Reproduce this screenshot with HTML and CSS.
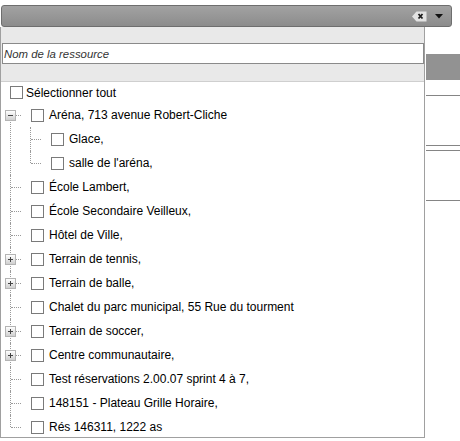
FILE: index.html
```html
<!DOCTYPE html>
<html lang="fr">
<head>
<meta charset="utf-8">
<title>Ressources</title>
<link rel="stylesheet" href="styles.css">
</head>
<body>
<div class="combo">
  <span class="clear"><svg width="15" height="11" viewBox="0 0 15 11"><path d="M0 5.5 L4.5 0.5 H14.5 V10.5 H4.5 Z" fill="#e2e2e2"/><path d="M6.5 3 L10.5 7.5 M10.5 3 L6.5 7.5" stroke="#1a1a1a" stroke-width="1.8"/></svg></span>
  <span class="arrow"><svg width="8" height="5" viewBox="0 0 8 5"><path d="M0 0 H8 L4 4.5 Z" fill="#111"/></svg></span>
</div>
<div class="below">
  <div class="panel">
    <div class="head"><input class="search" type="text" placeholder="Nom de la ressource"></div>
    <div class="all"><span class="cb"></span><span class="label">Sélectionner tout</span></div>
    <ul class="tree">
      <li class="node first">
        <div class="row"><span class="exp minus"></span><span class="cb"></span><span class="label">Aréna, 713 avenue Robert-Cliche</span></div>
        <ul class="sub">
          <li class="node"><div class="row"><span class="cb"></span><span class="label">Glace,</span></div></li>
          <li class="node last"><div class="row"><span class="cb"></span><span class="label">salle de l'aréna,</span></div></li>
        </ul>
      </li>
      <li class="node"><div class="row"><span class="cb"></span><span class="label">École Lambert,</span></div></li>
      <li class="node"><div class="row"><span class="cb"></span><span class="label">École Secondaire Veilleux,</span></div></li>
      <li class="node"><div class="row"><span class="cb"></span><span class="label">Hôtel de Ville,</span></div></li>
      <li class="node"><div class="row"><span class="exp plus"></span><span class="cb"></span><span class="label">Terrain de tennis,</span></div></li>
      <li class="node"><div class="row"><span class="exp plus"></span><span class="cb"></span><span class="label">Terrain de balle,</span></div></li>
      <li class="node"><div class="row"><span class="cb"></span><span class="label">Chalet du parc municipal, 55 Rue du tourment</span></div></li>
      <li class="node"><div class="row"><span class="exp plus"></span><span class="cb"></span><span class="label">Terrain de soccer,</span></div></li>
      <li class="node"><div class="row"><span class="exp plus"></span><span class="cb"></span><span class="label">Centre communautaire,</span></div></li>
      <li class="node"><div class="row"><span class="cb"></span><span class="label">Test réservations 2.00.07 sprint 4 à 7,</span></div></li>
      <li class="node"><div class="row"><span class="cb"></span><span class="label">148151 - Plateau Grille Horaire,</span></div></li>
      <li class="node last"><div class="row"><span class="cb"></span><span class="label">Rés 146311, 1222 as</span></div></li>
    </ul>
  </div>
  <div class="side">
    <div class="block"></div>
    <div class="line l1"></div>
    <div class="line l2"></div>
    <div class="line l3"></div>
    <div class="line l4"></div>
  </div>
</div>
</body>
</html>
```
FILE: styles.css
```css
html, body {
  margin: 0;
  padding: 0;
  background: #fff;
}
body {
  font-family: "Liberation Sans", Arial, sans-serif;
  font-size: 12px;
  color: #000;
  width: 460px;
  height: 441px;
  overflow: hidden;
}
.combo {
  margin: 5px 8px 0 1px;
  height: 20px;
  border: 1px solid #6e6e6e;
  border-radius: 3px;
  background: linear-gradient(#a2a2a2, #8c8c8c);
  display: flex;
  align-items: center;
  justify-content: flex-end;
  padding-right: 8px;
  box-sizing: content-box;
}
.clear {
  display: flex;
  margin-right: 8px;
}
.arrow {
  display: flex;
  margin-top: 1px;
}
.below {
  display: flex;
  align-items: flex-start;
}
.panel {
  width: 423px;
  height: 410px;
  border: 1px solid #a0a0a0;
  border-top: none;
  background: #fff;
  flex: none;
}
.head {
  background: #e9e9e9;
  padding: 16px 0 17px 1px;
  border-bottom: 1px solid #cfcfcf;
}
.search {
  display: block;
  box-sizing: border-box;
  width: 422px;
  height: 21px;
  margin: 0;
  border: 1px solid #8a8a8a;
  padding: 0 2px 0 1px;
  font-family: "Liberation Sans", Arial, sans-serif;
  font-size: 11.4px;
  background: #fff;
  outline: none;
}
.search::placeholder {
  font-style: italic;
  color: #333;
}
.all {
  height: 21px;
  display: flex;
  align-items: center;
  padding-left: 9px;
}
.all .label {
  margin-left: 3px;
}
.cb {
  display: inline-block;
  width: 11px;
  height: 11px;
  border: 1px solid #7a7a7a;
  background: #fff;
  flex: none;
}
.tree, .sub {
  list-style: none;
  margin: 0;
  padding: 0;
}
.sub {
  padding-left: 20px;
}
.node {
  position: relative;
}
.node::before {
  content: "";
  position: absolute;
  left: 9px;
  top: 0;
  bottom: 0;
  border-left: 1px dotted #9a9a9a;
}
.node.first::before {
  top: 12px;
}
.node.last::before {
  bottom: auto;
  height: 12px;
}
.node::after {
  content: "";
  position: absolute;
  left: 10px;
  top: 12px;
  width: 10px;
  border-top: 1px dotted #9a9a9a;
}
.row {
  position: relative;
  height: 24px;
  display: flex;
  align-items: center;
  padding-left: 30px;
  white-space: nowrap;
}
.row .label {
  margin-left: 5px;
}
.exp {
  position: absolute;
  left: 4px;
  top: 7px;
  width: 9px;
  height: 9px;
  border: 1px solid #b4b4b4;
  background: linear-gradient(#ffffff, #cfcfcf);
  z-index: 1;
}
.exp::before {
  content: "";
  position: absolute;
  left: 2px;
  top: 4px;
  width: 5px;
  height: 1px;
  background: #444;
}
.exp.plus::after {
  content: "";
  position: absolute;
  left: 4px;
  top: 2px;
  width: 1px;
  height: 5px;
  background: #444;
}
.side {
  flex: 1;
  margin-left: 1px;
}
.block {
  margin-top: 27px;
  height: 26px;
  background: #929292;
}
.line {
  height: 1px;
  background: #858585;
}
.l1 { margin-top: 15px; }
.l2 { margin-top: 49px; }
.l3 { margin-top: 4px; }
.l4 { margin-top: 49px; }
```
